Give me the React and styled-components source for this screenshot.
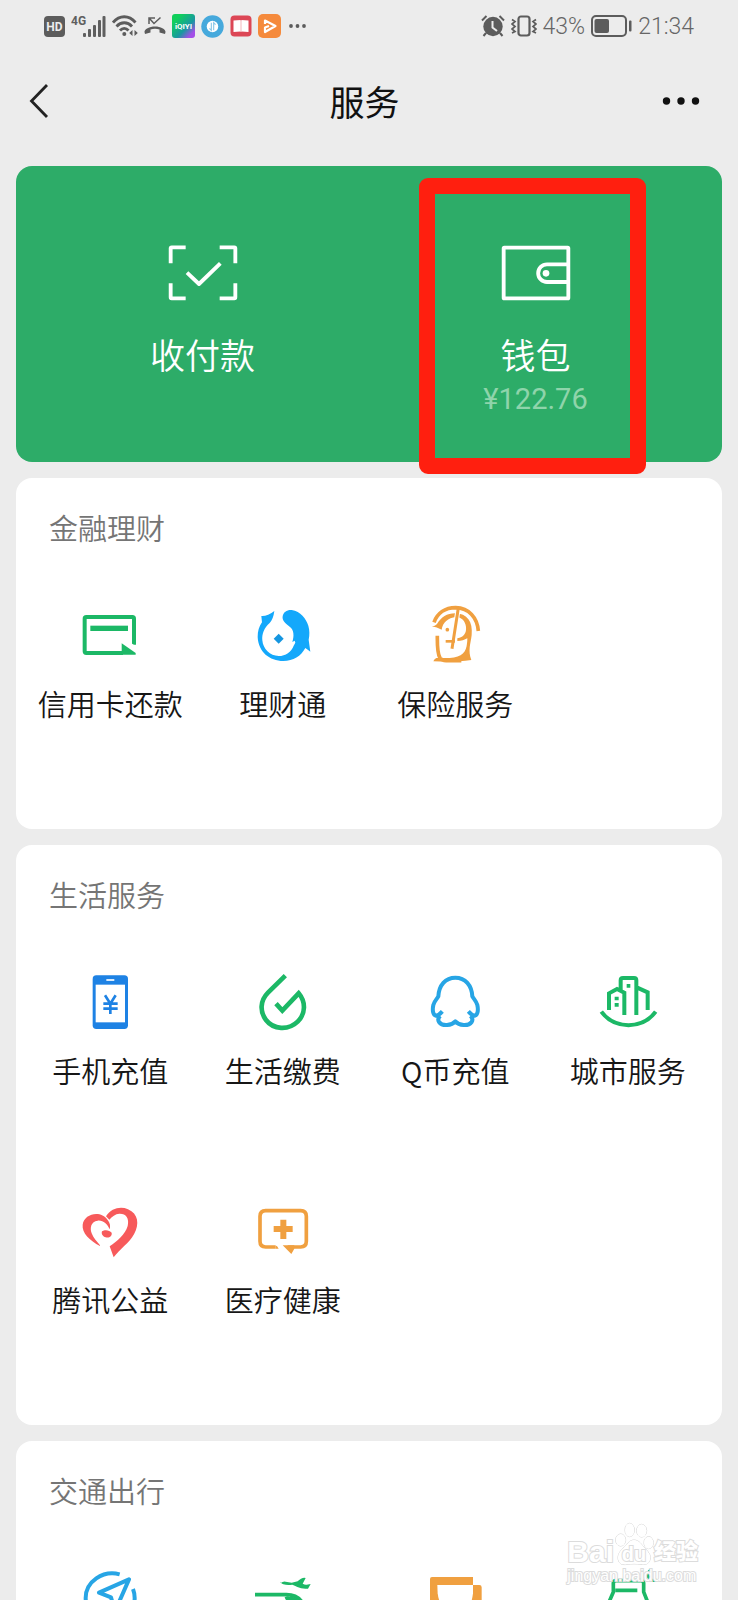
import React from "react";
import styled, { createGlobalStyle } from "styled-components";

const GREEN = "#1cb866";
const BLUE = "#27a5e5";
const ORANGE = "#f0a040";

const finance = [
  { name: "信用卡还款", icon: CardIcon },
  { name: "理财通", icon: FishIcon },
  { name: "保险服务", icon: InsuranceIcon },
];

const life = [
  { name: "手机充值", icon: PhoneIcon },
  { name: "生活缴费", icon: DropIcon },
  { name: "Q币充值", icon: QqIcon },
  { name: "城市服务", icon: CityIcon },
  { name: "腾讯公益", icon: HeartIcon },
  { name: "医疗健康", icon: MedicalIcon },
];

const travel = [
  { name: "出行服务", icon: CompassIcon, iconOnly: true },
  { name: "火车票机票", icon: PlaneIcon, iconOnly: true },
  { name: "滴滴出行", icon: TaxiIcon, iconOnly: true },
  { name: "酒店", icon: HotelIcon, iconOnly: true },
];

function App() {
  return (
    <Page>
      <GlobalStyle />
      <StatusBar />
      <Header>
        <BackButton aria-label="返回">
          <svg width="20" height="36" viewBox="0 0 20 36" fill="none">
            <path d="M18 2 2.5 18 18 34" stroke="#222" strokeWidth="2.8" />
          </svg>
        </BackButton>
        <Title>服务</Title>
        <MoreButton aria-label="更多">
          <svg width="38" height="10" viewBox="0 0 38 10" fill="#111">
            <circle cx="4.5" cy="5" r="3.7" />
            <circle cx="19" cy="5" r="3.7" />
            <circle cx="33.5" cy="5" r="3.7" />
          </svg>
        </MoreButton>
      </Header>
      <Content>
        <PayCard>
          <PayButton>
            <ScanIcon />
            <PayName>收付款</PayName>
          </PayButton>
          <PayButton $marked>
            <WalletIcon />
            <PayName>钱包</PayName>
            <Amount>¥122.76</Amount>
          </PayButton>
        </PayCard>
        <Group title="金融理财" items={finance} />
        <Group title="生活服务" items={life} />
        <Group title="交通出行" items={travel} />
      </Content>
      <Watermark>
        <WatermarkTop>
          <span>Bai</span>
          <Paw>
            <svg width="40" height="44" viewBox="0 0 120 132" fill="#fff" stroke="#d4d4d4" strokeWidth="3">
              <ellipse cx="20" cy="54" rx="15" ry="18" />
              <ellipse cx="47" cy="24" rx="14" ry="20" />
              <ellipse cx="83" cy="26" rx="15" ry="19" />
              <ellipse cx="104" cy="62" rx="14" ry="18" />
              <path d="M60 54c16 0 22 14 32 24 16 16 20 26 15 38-4 11-14 12-26 11-14-2-28-2-42 0-13 2-21 0-25-10-5-13 0-26 14-39 10-9 17-24 32-24z" />
            </svg>
            <em>du</em>
          </Paw>
          <b>经验</b>
        </WatermarkTop>
        <small>jingyan.baidu.com</small>
      </Watermark>
    </Page>
  );
}

export default App;

function Group({ title, items }) {
  return (
    <Card>
      <CardTitle>{title}</CardTitle>
      <Grid>
        {items.map(({ name, icon: ItemIcon, iconOnly }) => (
          <Item key={name} aria-label={iconOnly ? name : undefined}>
            <ItemIcon />
            {!iconOnly && <span>{name}</span>}
          </Item>
        ))}
      </Grid>
    </Card>
  );
}

function StatusBar() {
  return (
    <Status>
      <StatusSide>
        <svg width="21" height="21" viewBox="0 0 21 21">
          <rect width="21" height="21" rx="4" fill="#5c5c5c" />
          <text x="10.5" y="15" textAnchor="middle" fontSize="12" fontWeight="700" fill="#ececec">HD</text>
        </svg>
        <svg width="35" height="24" viewBox="0 0 35 24" fill="#5f5f5f">
          <text x="0" y="11" fontSize="12" fontWeight="700">4G</text>
          <rect x="12" y="19" width="3" height="4" rx="1" />
          <rect x="17" y="15" width="3" height="8" rx="1" />
          <rect x="22" y="11" width="3" height="12" rx="1" />
          <rect x="27" y="6" width="3" height="17" rx="1" />
          <rect x="31.5" y="2" width="3" height="21" rx="1" />
        </svg>
        <svg width="26" height="24" viewBox="0 0 26 24" fill="none" stroke="#5c5c5c" strokeWidth="2.8">
          <path d="M1 8.5C7.500 .8 17 .8 23.500 8.500M4.500 12.500c4.500-5 11-5 15.500 0M8 16.500c2.500-2.800 6-2.800 8.500 0" />
          <circle cx="12.3" cy="20" r="2" fill="#5c5c5c" stroke="none" />
          <path d="m20.500 16-3.300 3 3.300 3zM22.500 16l3.300 3-3.300 3z" fill="#5c5c5c" stroke="none" />
        </svg>
        <svg width="22" height="20" viewBox="0 0 22 20" fill="none" stroke="#5c5c5c" strokeWidth="1.5">
          <path d="M5 8V2h6M5.500 2.500l4.500 5 6.500-6" />
          <path d="M.5 16c-.3-3 5-5.500 10.500-5.500S21.800 13 21.500 16l-.5 2-5.500-1.500v-3c-3-1-6-1-9 0v3L1 18z" fill="#5c5c5c" stroke="none" />
        </svg>
        <svg width="23" height="24" viewBox="0 0 23 24">
          <defs>
            <linearGradient id="iqiyi" x1="0" y1="0" x2="1" y2="1">
              <stop offset="0.2" stopColor="#10cf5b" />
              <stop offset="0.6" stopColor="#1899a0" />
              <stop offset="0.85" stopColor="#a34fe8" />
            </linearGradient>
          </defs>
          <rect width="23" height="24" rx="3" fill="url(#iqiyi)" />
          <text x="11.5" y="15" textAnchor="middle" fontSize="8" fontWeight="700" fill="#fff">iQIYI</text>
        </svg>
        <svg width="23" height="23" viewBox="0 0 24 24">
          <circle cx="12" cy="12" r="11.7" fill="#46a9dc" />
          <circle cx="12" cy="12" r="6" fill="#fff" />
          <path d="M10.800 8v8l-2-2M13.200 16V8l2 2" fill="none" stroke="#8dc9e8" strokeWidth="1.2" />
        </svg>
        <svg width="22" height="22" viewBox="0 0 22 22">
          <rect x=".5" y=".5" width="21" height="21" rx="4" fill="#dc4655" />
          <path d="M3.500 5.500 10.500 5l.5.8.5-.8 7 .5V17l-7-.5-.5.5-.5-.5-7 .5z" fill="#fff" />
          <path d="M11 5v12" stroke="#f0a3aa" strokeWidth="0.8" />
        </svg>
        <svg width="23" height="24" viewBox="0 0 23 24">
          <rect width="23" height="24" rx="5" fill="#f58a3c" />
          <path d="M7 10V6.500L17.500 12 7 18v-4.500l4-1.500" fill="none" stroke="#fff" strokeWidth="2.2" strokeLinejoin="round" />
        </svg>
        <svg width="20" height="6" viewBox="0 0 20 6" fill="#5c5c5c">
          <circle cx="4" cy="3" r="1.9" />
          <circle cx="10.5" cy="3" r="1.9" />
          <circle cx="17" cy="3" r="1.9" />
        </svg>
      </StatusSide>
      <StatusSide>
        <svg width="24" height="22" viewBox="0 0 24 22" fill="none" stroke="#5c5c5c" strokeWidth="2">
          <circle cx="12" cy="11.5" r="9.7" fill="#5c5c5c" stroke="none" />
          <path d="M1 5.500 5.500 1M23 5.500 18.500 1M5 18l-2.500 3M19 18l2.500 3" />
          <path d="M11.500 6v6.500l4.500 3.500" stroke="#ececec" />
        </svg>
        <svg width="26" height="22" viewBox="0 0 26 22" fill="none" stroke="#5c5c5c" strokeWidth="1.7">
          <rect x="7.5" y="1.5" width="11" height="19" rx="2.5" strokeWidth="2.2" />
          <path d="m1 4.500 3 2-3 2.500 3 2.500-3 2.500 3 2.500-3 1.500M25 4.500l-3 2 3 2.500-3 2.500 3 2.500-3 2.500 3 1.500" />
        </svg>
        <StatusText>43%</StatusText>
        <svg width="41" height="22" viewBox="0 0 41 22">
          <rect x="1" y="1" width="34" height="20" rx="4" fill="none" stroke="#5c5c5c" strokeWidth="2" />
          <rect x="3.5" y="4" width="14.5" height="14" rx="2" fill="#5c5c5c" />
          <rect x="38" y="5.5" width="2.5" height="11" rx="1" fill="#5c5c5c" />
        </svg>
        <StatusText>21:34</StatusText>
      </StatusSide>
    </Status>
  );
}

function ScanIcon() {
  return (
    <svg width="70" height="56" viewBox="112 74 210 168" fill="none" stroke="#fff" strokeWidth="11.5">
      <path d="M120 129V84q0-3 3-3h42M267 81h44q3 0 3 3v45M120 189v42q0 3 3 3h42M267 234h44q3 0 3-3v-42" />
      <path d="M169 157 205 191 269 129" strokeLinejoin="round" />
    </svg>
  );
}

function WalletIcon() {
  return (
    <svg width="70" height="56" viewBox="273 224 210 168" fill="none" stroke="#fff" strokeWidth="11.5">
      <rect x="281" y="232" width="194" height="152" rx="2" />
      <path d="M475 282h-64a26 26 0 0 0 0 53h64" />
      <circle cx="408" cy="309" r="10" fill="#fff" stroke="none" />
    </svg>
  );
}

function CardIcon() {
  return (
    <Icon viewBox="241 375 180 180">
      <path d="M403 494V416q0-5-5-5H260q-5 0-5 5v98q0 5 5 5h110" fill="none" stroke={GREEN} strokeWidth="12" />
      <rect x="272" y="437" width="113" height="16" fill={GREEN} />
      <path d="M366 490 408 519v5h-42z" fill={GREEN} />
      <path d="m394 489 18 12v12l-24-14z" fill="#fff" />
    </Icon>
  );
}

function FishIcon() {
  return (
    <Icon viewBox="758 375 180 180">
      <path
        d="M783 408q19 1 39-15-3 24-14 36c-16 14-24 33-22 52 2 26 23 47 49 47 21 0 38-13 45-31l5-9-2-6-7 4c6-18 5-37-8-46-15-10-23-20-21-31 2-13 13-20 27-19 27 3 43 27 50 47 4 14 4 28 1 42l5 36q-8-6-15-11c-13 24-36 39-66 39-41 0-75-27-77-72 0-17 4-31 13-44z"
        fill="#14a8fb"
      />
      <path d="m835 461 15 15-15 15-15-15z" fill="#1596e0" />
    </Icon>
  );
}

function InsuranceIcon() {
  return (
    <Icon viewBox="285 75 180 180">
      <path d="M312 127C322 100 345 83 377 83c40 1 65 30 68 70" fill="none" stroke={ORANGE} strokeWidth="11" />
      <path d="M305 139q9 1 16-7c12-20 30-32 54-32 37 0 54 26 50 65-3 26-12 46-1 75-37 6-77 6-114 4q3-7 9-10h40c38-2 50-18 52-44 1-5 1-11 1-15-8 5-18 8-30 8v-8c19-3 28-16 26-34-2-18-13-29-30-30-24 2-40 17-43 38q-14-8-30-10z" fill={ORANGE} />
      <path d="M322 167c0 28-1 52 8 67 6 8 16 8 30 8h34" fill="none" stroke={ORANGE} strokeWidth="11" />
      <path d="M383 96 366 206" fill="none" stroke="#fff" strokeWidth="15" />
      <path d="M385 84 366 206" fill="none" stroke={ORANGE} strokeWidth="9" />
      <path d="M347 184h28" stroke={ORANGE} strokeWidth="8" />
      <circle cx="352" cy="149" r="5.5" fill={ORANGE} />
    </Icon>
  );
}

function PhoneIcon() {
  return (
    <Icon viewBox="241 366 180 180">
      <rect x="279" y="376" width="106" height="161" rx="11" fill="#1e82e4" />
      <rect x="288" y="404" width="88" height="113" fill="#fff" />
      <path d="M320 390h24" stroke="#fff" strokeWidth="5" />
      <path d="m316 436 16 25 16-25M332 461v31M311 461h43M311 476h43" fill="none" stroke="#1e82e4" strokeWidth="8" />
    </Icon>
  );
}

function DropIcon() {
  return (
    <Icon viewBox="758 366 180 180">
      <path
        d="M855 377 803 428c-25 25-24 58-6 82 22 29 67 32 95 5 24-24 25-59 3-85l-49 52-19-21"
        fill="none"
        stroke={GREEN}
        strokeWidth="14"
      />
    </Icon>
  );
}

function QqIcon() {
  return (
    <Icon viewBox="135 66 180 180">
      <path
        d="M187 184c-7 8-11 12-19 13-10-2-11-18-8-32 3-12 11-18 15-26 2-33 21-56 51-56s49 23 51 56c4 8 12 14 15 26 3 14 2 30-8 32-8-1-12-5-19-13m-84 14c-5 4-8 11-4 18 10 14 38 11 49-2 11 13 39 16 49 2 4-7 1-14-4-18"
        fill="none"
        stroke={BLUE}
        strokeWidth="12"
        strokeLinejoin="round"
      />
    </Icon>
  );
}

function CityIcon() {
  return (
    <Icon viewBox="651 66 180 180">
      <g fill="none" stroke={GREEN} strokeWidth="12">
        <path d="M684 180V130l24-13 22 11v67M719 120V91q0-7 7-7h33q7 0 7 7v104M767 112l33 15v53" />
        <path d="M661 185c40 54 123 54 163 0" />
      </g>
      <path d="M701 140h12v11h-12zM701 159h12v11h-12zM737 102h11v11h-11z" fill={GREEN} />
    </Icon>
  );
}

function HeartIcon() {
  return (
    <Icon viewBox="151 63 180 180">
      <path
        d="M211 198c-31-17-55-39-52-64 4-34 55-45 75-14 7 9 9 18 6 28-7-16-20-28-36-26-20 2-24 22-18 38 5 14 15 24 25 36zM229 109c16-24 43-31 66-21 31 13 35 45 18 75-15 27-41 43-61 69l-12-33c24-17 46-35 54-61 6-24-6-38-25-37-12 1-22 8-30 18z"
        fill="#f75a5b"
      />
      <path d="M217 154c8-6 23-4 29 4 2 10-7 17-18 14-8-2-14-10-11-18z" fill="#f75a5b" />
    </Icon>
  );
}

function MedicalIcon() {
  return (
    <Icon viewBox="668 63 180 180">
      <path d="M735 201h-29q-17 0-17-17v-75q0-17 17-17h105q17 0 17 17v75q0 17-17 17h-39" fill="none" stroke={ORANGE} strokeWidth="11" />
      <path d="M735 196q7 2 10 10h-10zM757 196h35v10l-9 16z" fill={ORANGE} />
      <path d="M759 119v58M730 147h57" stroke={ORANGE} strokeWidth="18" />
    </Icon>
  );
}

function CompassIcon() {
  return (
    <Icon viewBox="241 504 180 180" fill="none" stroke={BLUE} strokeWidth="12">
      <path d="M360 523C309 510 258 545 258 594c0 42 34 74 74 74s73-33 73-74q0-14-5-27" />
      <path d="M388 538 298 578l36 14 12 42z" strokeLinejoin="round" />
    </Icon>
  );
}

function PlaneIcon() {
  return (
    <Icon viewBox="758 504 180 180">
      <path d="M841 549q8-6 15-4l18 3 18-4q4-5 10-8 8-4 14-2l-9 17q7 4 12 3l12-2-8 14q-18 2-32-5-8-4-15-7-14 3-27-1-6-2-8-8z" fill={GREEN} />
      <path d="M764 584h94c32 0 47 16 55 38v24H764M858 590q10 26 50 26" fill="none" stroke={GREEN} strokeWidth="11" />
      <path d="M858 590q36-2 48 24-38 0-48-24z" fill={GREEN} />
    </Icon>
  );
}

function TaxiIcon() {
  return (
    <Icon viewBox="165 264 180 180">
      <path d="M180 297q0-6 6-6h123v24h19q7 0 7 7v80q0 6-6 6H186q-6 0-6-6z" fill={ORANGE} />
      <path d="M202 315h107v25q-4 36-20 44h-60q-22-8-26-44z" fill="#fff" />
    </Icon>
  );
}

function HotelIcon() {
  return (
    <Icon viewBox="681 264 180 180" fill="none" stroke={GREEN} strokeWidth="11">
      <path d="M712 371 727 336v-26q0-8 8-8h75q8 0 8 8v26l14 35v50H712v-50h120M733 331h66" />
      <path d="M839 270c-16 12-6 38 18 30" strokeWidth="9" />
    </Icon>
  );
}

const GlobalStyle = createGlobalStyle`
  * {
    box-sizing: border-box;
  }

  body {
    margin: 0;
    background-color: #ececec;
    font-family: "Noto Sans CJK SC", sans-serif;
    font-weight: 350;
  }

  button {
    padding: 0;
    border: none;
    background: none;
    color: inherit;
    font: inherit;
    cursor: pointer;
  }
`;

const Page = styled.div`
  position: relative;
  height: 100vh;
  overflow: hidden;

  display: flex;
  flex-direction: column;
`;

const Status = styled.div`
  flex: none;
  height: 52px;
  padding: 0 44px;

  display: flex;
  align-items: center;
  justify-content: space-between;

  font-family: Roboto, sans-serif;
`;

const StatusSide = styled.div`
  display: flex;
  align-items: center;
  gap: 6px;
`;

const StatusText = styled.span`
  padding-top: 2px;
  color: #666;
  font-size: 23px;
  font-weight: 300;
  line-height: 28px;
`;

const Header = styled.header`
  flex: none;
  height: 98px;
  margin-bottom: 16px;
  padding: 0 38px 0 29px;

  display: grid;
  grid-template-columns: 1fr auto 1fr;
  align-items: center;
`;

const BackButton = styled.button`
  justify-self: start;
  display: flex;
`;

const MoreButton = styled.button`
  justify-self: end;
  display: flex;
`;

const Title = styled.h1`
  margin: 0;
  color: #111;
  font-size: 35px;
  font-weight: 400;
  line-height: 48px;
`;

const Content = styled.main`
  flex: 1;
  min-height: 0;
  padding: 0 16px;
  overflow-y: auto;
  scrollbar-width: none;

  display: flex;
  flex-direction: column;
  gap: 16px;
`;

const PayCard = styled.section`
  flex: none;
  min-height: 296px;
  padding: 0 20px;
  border-radius: 16px;
  background-color: #2dac68;
  color: #fff;

  display: grid;
  grid-template-columns: 1fr 1fr;
`;

const PayButton = styled.button`
  position: relative;
  padding-top: 79px;

  display: flex;
  flex-direction: column;
  align-items: center;

  &::after {
    content: "";
    display: ${({ $marked }) => ($marked ? "block" : "none")};
    position: absolute;
    z-index: 1;
    inset: 12px 56px -12px 50px;
    border: 16px solid #ff1f0f;
    border-radius: 9px;
  }
`;

const PayName = styled.span`
  margin-top: 28px;
  font-size: 35px;
  line-height: 50px;
`;

const Amount = styled.span`
  color: #8fd4ab;
  font-family: Roboto, sans-serif;
  font-size: 29px;
  font-weight: 400;
  line-height: 40px;
`;

const Card = styled.section`
  flex: none;
  border-radius: 16px;
  background-color: #fff;
`;

const CardTitle = styled.h2`
  height: 122px;
  margin: 0;
  padding: 29px 33px 0;
  color: #757575;
  font-size: 29px;
  font-weight: 350;
  line-height: 40px;
`;

const Grid = styled.div`
  padding: 0 8px;

  display: grid;
  grid-template-columns: repeat(4, 1fr);
  grid-auto-rows: 229px;
`;

const Item = styled.button`
  padding-top: 5px;
  color: #161616;
  font-size: 29px;
  line-height: 40px;
  white-space: nowrap;

  display: flex;
  flex-direction: column;
  align-items: center;
  gap: 18px;
`;

const Icon = styled.svg`
  width: 60px;
  height: 60px;
`;

const Watermark = styled.div`
  position: absolute;
  right: 40px;
  bottom: 14px;
  color: #fff;
  -webkit-text-stroke: 2px #dcdcdc;
  paint-order: stroke fill;
  font-family: "Liberation Sans", "Noto Sans CJK SC", sans-serif;
  pointer-events: none;

  small {
    display: block;
    font-size: 16px;
    line-height: 20px;
  }
`;

const WatermarkTop = styled.div`
  display: flex;
  align-items: flex-end;
  font-size: 30px;
  font-weight: 700;
  line-height: 28px;

  b {
    font-size: 22px;
  }
`;

const Paw = styled.span`
  position: relative;
  display: flex;

  em {
    position: absolute;
    inset: auto 0 0;
    font-size: 20px;
    font-style: normal;
    line-height: 24px;
    text-align: center;
  }
`;
